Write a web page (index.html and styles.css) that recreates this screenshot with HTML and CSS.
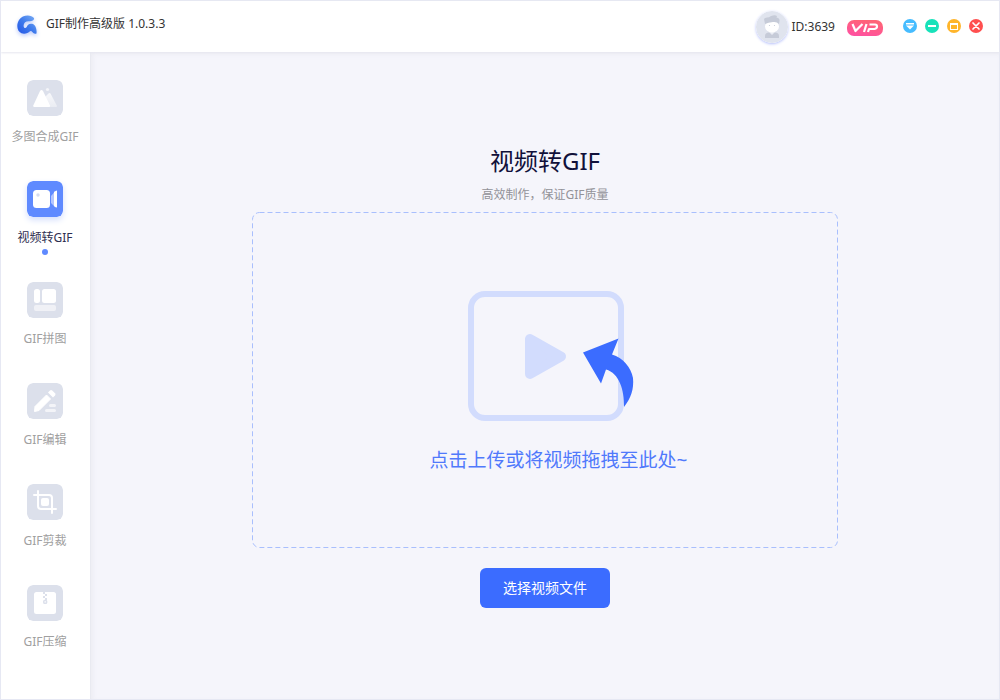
FILE: index.html
```html
<!DOCTYPE html>
<html lang="zh-CN">
<head>
<meta charset="utf-8">
<meta name="viewport" content="width=device-width, initial-scale=1">
<title>GIF制作高级版</title>
<link rel="stylesheet" href="styles.css">
</head>
<body>
<div class="app">
  <header class="topbar">
    <div class="brand">
      <svg class="brand-logo" viewBox="0 0 20 20" aria-hidden="true">
        <defs>
          <linearGradient id="logoA" x1="1" y1="0" x2="0" y2="1"><stop offset="0" stop-color="#7fb2f5"/><stop offset=".5" stop-color="#3f7bec"/><stop offset="1" stop-color="#2456e6"/></linearGradient>
        </defs>
        <path d="M17 3C14-.8 5.500-.5 2 5C-1 10 0 16.500 4.500 18.300C8 19.600 11 18 13 16.200Q14.300 15.300 15.300 17Q17 19.500 19.500 18.500C20 14 18.500 9.500 15 8.800C12 8.300 10.500 9.800 9.700 12C8.500 13.800 6.500 13 6.600 10.500C6.700 7.500 9 6 12 6.200C15 6.400 17.500 5.500 17 3Z" fill="url(#logoA)"/>
      </svg>
      <h1 class="brand-name">GIF制作高级版 1.0.3.3</h1>
    </div>
    <div class="account">
      <svg class="avatar" viewBox="0 0 32 32" aria-hidden="true">
        <circle cx="16" cy="16" r="16" fill="#e0e4ee"/>
        <path d="M9 27V25Q9 21.500 13 21.500H19Q23 21.500 23 25V27Z" fill="#c6cbd8"/>
        <path d="M13.500 21.500L16 24L18.500 21.500V20H13.500Z" fill="#e9ecf3"/>
        <ellipse cx="16" cy="15.500" rx="7" ry="6" fill="#fff"/>
        <path d="M9 13L8 8Q8.500 6.500 11 6.500Q13 6.500 15 5Q19 3.500 21 5L20.500 6.500Q24 7 23.500 10L23 13Q21 10.500 17 11Q12 11.500 9 13Z" fill="#c6cbd8"/>
        <circle cx="13.500" cy="14.500" r=".6" fill="#c6cbd8"/><circle cx="18.500" cy="14.500" r=".6" fill="#c6cbd8"/>
      </svg>
      <span class="user-id">ID:3639</span>
      <svg class="vip" viewBox="0 0 36 16" role="img" aria-label="VIP">
        <defs><linearGradient id="vipBg" x1="0" y1="1" x2=".4" y2="0"><stop offset="0" stop-color="#ff4fa5"/><stop offset="1" stop-color="#ff6478"/></linearGradient></defs>
        <rect width="36" height="16" rx="7" fill="url(#vipBg)"/>
        <g fill="none" stroke="#fff" stroke-width="2.200" stroke-linejoin="round"><path d="M5.500 4L8.500 11L15.500 4"/><path d="M19.500 4L17 12"/><path d="M21 12L22 9H27.500Q30 8.500 30 6.500Q30 4.500 28 4.500H22.500"/></g>
      </svg>
      <div class="window-controls">
        <button class="win-btn" type="button" aria-label="菜单"><svg viewBox="0 0 14 14"><circle cx="7" cy="7" r="7" fill="#46bcff"/><path d="M3 4H11V5.400H3ZM3 6.600H11L7 10.500Z" fill="#fff"/></svg></button>
        <button class="win-btn" type="button" aria-label="最小化"><svg viewBox="0 0 14 14"><circle cx="7" cy="7" r="7" fill="#17e2ba"/><path d="M3 6H11V8H3Z" fill="#fff"/></svg></button>
        <button class="win-btn" type="button" aria-label="最大化"><svg viewBox="0 0 14 14"><circle cx="7" cy="7" r="7" fill="#ffb52b"/><path d="M3 4H11V11H3ZM4 6V10H10V6Z" fill="#fff" fill-rule="evenodd"/></svg></button>
        <button class="win-btn" type="button" aria-label="关闭"><svg viewBox="0 0 14 14"><circle cx="7" cy="7" r="7" fill="#ff4f4f"/><path d="M4 4L10 10M10 4L4 10" stroke="#fff" stroke-width="1.700" stroke-linecap="round"/></svg></button>
      </div>
    </div>
  </header>

  <div class="body">
    <nav class="sidebar" aria-label="功能">
      <button class="nav-item" type="button">
        <svg class="nav-icon" viewBox="0 0 36 36" aria-hidden="true">
          <defs><linearGradient id="hill" x1="0" y1="0" x2="0" y2="1"><stop offset="0" stop-color="#fff" stop-opacity=".8"/><stop offset="1" stop-color="#fff" stop-opacity=".4"/></linearGradient></defs>
          <rect class="tile" width="36" height="36" rx="6"/>
          <path d="M18 17L21.500 13.500Q22.500 12.500 23.500 13.500L30 26Q30 27 29 27H18Z" fill="url(#hill)"/>
          <circle cx="20.500" cy="9.500" r="1.600" fill="#f3f4f8"/>
          <path d="M6.300 25.500L13 11Q14.500 8.800 16 11L23 25.500Q23.300 27 22 27H7.200Q6 27 6.300 25.500Z" fill="#fff"/>
        </svg>
        <span>多图合成GIF</span>
      </button>
      <button class="nav-item is-active" type="button" aria-current="page">
        <svg class="nav-icon" viewBox="0 0 36 36" aria-hidden="true">
          <rect class="tile" width="36" height="36" rx="6"/>
          <rect x="6" y="9" width="17" height="18" rx="3.500" fill="#fff"/>
          <circle cx="11" cy="14" r="1.700" fill="#d5dcf0"/>
          <path d="M24 15Q26 13 28 10V26Q26 24 24 22Z" fill="#b4c6ff"/>
          <path d="M27 11Q28.500 9.500 30 9.500V26.500Q28.500 26.500 27 25Z" fill="#fff"/>
        </svg>
        <span>视频转GIF</span>
      </button>
      <button class="nav-item" type="button">
        <svg class="nav-icon" viewBox="0 0 36 36" aria-hidden="true">
          <rect class="tile" width="36" height="36" rx="6"/>
          <rect x="7" y="7" width="6" height="14" rx="2.500" fill="#fff"/><rect x="15" y="7" width="14" height="14" rx="2.500" fill="#fff"/>
          <rect x="7" y="23" width="22" height="6" rx="2" fill="#f0f1f6"/>
        </svg>
        <span>GIF拼图</span>
      </button>
      <button class="nav-item" type="button">
        <svg class="nav-icon" viewBox="0 0 36 36" aria-hidden="true">
          <rect class="tile" width="36" height="36" rx="6"/>
          <path d="M7.500 28.500L8 23.500L19.500 12L23.500 16L12 27.500Z" fill="#fff" stroke="#fff" stroke-linejoin="round"/>
          <path d="M21 9.500L23 7.500Q24 6.500 25.200 7.500L28 10.300Q29 11.500 28 12.500L26 14.500Z" fill="#fff"/>
          <path d="M23.500 22.500H27.500M19.500 27.500H27.500" stroke="#f3f4f8" stroke-width="3" stroke-linecap="round"/>
        </svg>
        <span>GIF编辑</span>
      </button>
      <button class="nav-item" type="button">
        <svg class="nav-icon" viewBox="0 0 36 36" aria-hidden="true">
          <rect class="tile" width="36" height="36" rx="6"/>
          <path d="M7 11H22Q25 11 25 14V29M11 7V22Q11 25 14 25H29" fill="none" stroke="#fff" stroke-width="2" stroke-linecap="round"/>
          <rect x="14" y="14" width="8" height="8" rx="2" fill="#fff"/>
        </svg>
        <span>GIF剪裁</span>
      </button>
      <button class="nav-item" type="button">
        <svg class="nav-icon" viewBox="0 0 36 36" aria-hidden="true">
          <rect class="tile" width="36" height="36" rx="6"/>
          <rect x="7" y="7" width="22" height="22" rx="2.500" fill="#fff"/>
          <path class="tile" d="M16 7H18V9H16ZM18 9H20V11H18ZM16 11H18V13H16ZM18 13H20V15H18Z"/>
          <rect x="16.800" y="15.500" width="2.800" height="2.800" rx=".8" fill="none" stroke="#dce0eb" stroke-width="1.500"/>
        </svg>
        <span>GIF压缩</span>
      </button>
    </nav>

    <main class="main">
      <h2 class="title">视频转GIF</h2>
      <p class="subtitle">高效制作，保证GIF质量</p>
      <button class="dropzone" type="button">
        <svg class="dropzone-outline" aria-hidden="true"><rect x=".5" y=".5" rx="7"/></svg>
        <svg class="dropzone-art" viewBox="0 0 181 130" aria-hidden="true">
          <rect x="3" y="3" width="150" height="124" rx="14" fill="none" stroke="#d2dcfd" stroke-width="6"/>
          <path d="M62 48V83L93 65.500Z" fill="#d2dcfd" stroke="#d2dcfd" stroke-width="10" stroke-linejoin="round"/>
          <path d="M115 61.500L150.500 47.500L144 63.500C155 67 163 76 165 87C166 98 163 107 156 116C156.500 99 151 82 138 78.500L133 92.500Z" fill="#3b6cff"/>
        </svg>
        <span class="dropzone-text">点击上传或将视频拖拽至此处~</span>
      </button>
      <button class="primary" type="button">选择视频文件</button>
    </main>
  </div>
</div>
</body>
</html>
```
FILE: styles.css
```css
* { box-sizing: border-box; }

body {
  margin: 0;
  font-family: "Noto Sans", "Noto Sans CJK SC", sans-serif;
  font-size: 12px;
  line-height: 18px;
  color: #333;
}

button {
  padding: 0;
  border: 0;
  background: none;
  color: inherit;
  font: inherit;
  cursor: pointer;
}

.app {
  display: flex;
  flex-direction: column;
  min-height: 100vh;
  border: 1px solid #e6e8f3;
  background: #fff;
}

.topbar {
  position: relative;
  display: flex;
  justify-content: space-between;
  align-items: center;
  height: 51px;
  padding: 0 16px;
  box-shadow: 0 1px 2px #e6e7ef;
}

.brand { display: flex; align-items: center; gap: 9px; padding-bottom: 4px; }
.brand-logo {
  width: 20px;
  height: 20px;
  overflow: visible;
  filter: drop-shadow(0 2px 2px #bccbfa);
}
.brand-name { margin: 0; padding-bottom: 2px; font-size: 12px; font-weight: 400; }

.account { display: flex; align-items: center; }
.avatar {
  width: 32px;
  height: 32px;
  margin-right: 3px;
  border-radius: 50%;
  box-shadow: 0 1px 3px #b5bffa;
}
.vip { width: 36px; height: 16px; margin: 2px 20px 0 12px; }
.window-controls { display: flex; gap: 8px; padding-bottom: 2px; }
.win-btn { width: 14px; height: 14px; }
.win-btn svg { display: block; width: 100%; }

.body { display: flex; flex: 1; }

.sidebar {
  display: flex;
  flex-direction: column;
  gap: 35px;
  flex: 0 0 90px;
  padding: 28px 0;
  border-right: 1px solid #e9eaf1;
}
.nav-item {
  position: relative;
  display: flex;
  flex-direction: column;
  align-items: center;
  gap: 12px;
  padding-right: 1px;
  color: #a0a0a0;
}
.nav-icon { width: 36px; height: 36px; border-radius: 6px; }
.tile { fill: #dce0eb; }
.is-active { color: #2e2e50; }
.is-active .tile { fill: #5f8aff; }
.is-active .nav-icon { box-shadow: 0 3px 6px #d5dffc; }
.is-active::after {
  content: "";
  position: absolute;
  bottom: -8px;
  width: 6px;
  height: 6px;
  border-radius: 50%;
  background: #5f8aff;
}

.main {
  display: flex;
  flex: 1;
  flex-direction: column;
  align-items: center;
  justify-content: center;
  padding: 20px;
  background: #f5f5fb;
  box-shadow: inset 2px 2px 4px #ececf3;
}
.title {
  margin: 0 0 8px;
  color: #11113a;
  font-size: 24px;
  font-weight: 400;
  line-height: 34px;
}
.subtitle { margin: 0 0 8px; color: #929298; }

.dropzone {
  position: relative;
  display: flex;
  flex-direction: column;
  align-items: center;
  justify-content: center;
  gap: 26px;
  width: 100%;
  max-width: 586px;
  min-height: 336px;
  padding: 4px 0 0 27px;
}
.dropzone-outline {
  position: absolute;
  inset: 0;
  width: 100%;
  height: 100%;
}
.dropzone-outline rect {
  width: calc(100% - 1px);
  height: calc(100% - 1px);
  fill: none;
  stroke: #a9bffd;
  stroke-dasharray: 5 3;
}
.dropzone-art { width: 181px; height: 130px; }
.dropzone-text { color: #5079fb; font-size: 19px; line-height: 26px; }

.primary {
  min-width: 130px;
  height: 40px;
  margin-top: 20px;
  border-radius: 6px;
  background: #3b6cff;
  color: #fff;
  font-size: 14px;
}
```
